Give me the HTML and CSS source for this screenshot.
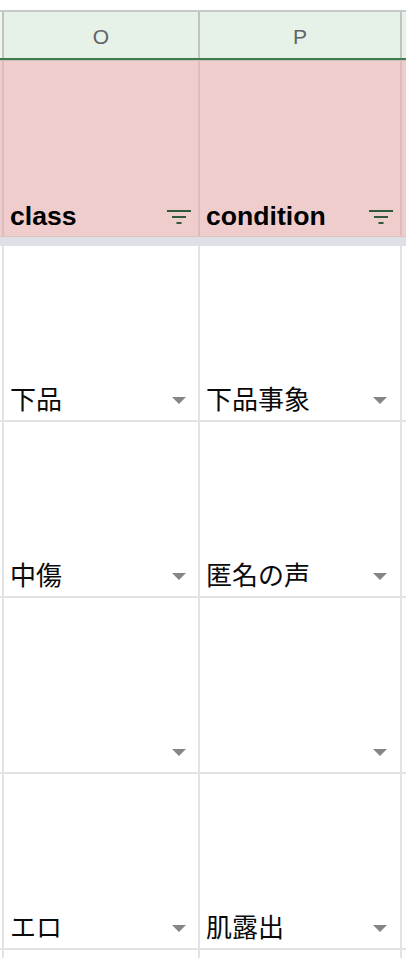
FILE: index.html
```html
<!DOCTYPE html>
<html lang="ja">
<head>
<meta charset="utf-8">
<title>Sheet</title>
<link rel="stylesheet" href="styles.css">
</head>
<body>
<div class="sheet">
  <div class="gap"></div>
  <div class="row colhead">
    <div class="cell c-o">O</div>
    <div class="cell c-p">P</div>
    <div class="cell tail"></div>
  </div>
  <div class="row head">
    <div class="cell c-o"><span class="txt">class</span><svg class="filter" width="24" height="14" viewBox="0 0 24 14"><rect x="0" y="0" width="24" height="2"/><rect x="5" y="6" width="14" height="2"/><rect x="9.5" y="12" width="5" height="2"/></svg></div>
    <div class="cell c-p"><span class="txt">condition</span><svg class="filter" width="24" height="14" viewBox="0 0 24 14"><rect x="0" y="0" width="24" height="2"/><rect x="5" y="6" width="14" height="2"/><rect x="9.5" y="12" width="5" height="2"/></svg></div>
    <div class="cell tail"></div>
  </div>
  <div class="freeze"></div>
  <div class="row body">
    <div class="cell c-o"><span class="txt">下品</span><span class="dd"></span></div>
    <div class="cell c-p"><span class="txt">下品事象</span><span class="dd"></span></div>
    <div class="cell tail"></div>
  </div>
  <div class="row body">
    <div class="cell c-o"><span class="txt">中傷</span><span class="dd"></span></div>
    <div class="cell c-p"><span class="txt">匿名の声</span><span class="dd"></span></div>
    <div class="cell tail"></div>
  </div>
  <div class="row body">
    <div class="cell c-o"><span class="txt"></span><span class="dd"></span></div>
    <div class="cell c-p"><span class="txt"></span><span class="dd"></span></div>
    <div class="cell tail"></div>
  </div>
  <div class="row body">
    <div class="cell c-o"><span class="txt">エロ</span><span class="dd"></span></div>
    <div class="cell c-p"><span class="txt">肌露出</span><span class="dd"></span></div>
    <div class="cell tail"></div>
  </div>
  <div class="row body last">
    <div class="cell c-o"></div>
    <div class="cell c-p"></div>
    <div class="cell tail"></div>
  </div>
</div>
</body>
</html>
```
FILE: styles.css
```css
html, body {
  margin: 0;
  padding: 0;
  background: #ffffff;
}
body {
  font-family: "Liberation Sans", "Noto Sans CJK JP", sans-serif;
}
.sheet {
  width: 406px;
  height: 958px;
  overflow: hidden;
}
.gap {
  height: 10px;
}
.row {
  display: flex;
  padding-left: 2px;
}
.cell {
  box-sizing: border-box;
  border-left: 2px solid transparent;
  display: flex;
  align-items: flex-end;
}
.c-o {
  width: 196px;
}
.c-p {
  width: 202px;
}
.tail {
  flex: 1;
}

/* column letters */
.colhead {
  background: #f1f6f2;
  border-top: 2px solid #c8c8c8;
  border-bottom: 2px solid #3f7c4b;
}
.colhead .cell {
  height: 46px;
  align-items: center;
  justify-content: center;
  padding-top: 4px;
  background: #e6f1e8;
  border-left-color: #c1c3c1;
  font-size: 21px;
  color: #5f6368;
}

/* header row */
.head {
  background: #efcdcd;
  border-top: 1px solid #cdbfbf;
  border-bottom: 1px solid #e2c1c4;
}
.head .cell {
  height: 175px;
  border-left-color: #dcbcbe;
  padding: 0 7px 5px 6px;
  font-size: 26.6px;
  line-height: 30px;
  font-weight: bold;
  color: #000000;
}
.head .tail {
  padding: 0;
}
.filter {
  flex: none;
  margin-bottom: 7px;
  fill: #2d5b3a;
}

.freeze {
  height: 9px;
  background: #dfe0e6;
}

/* body rows */
.body {
  border-bottom: 2px solid #e3e3e3;
}
.body .cell {
  height: 174px;
  border-left-color: #e3e3e3;
  font-size: 26px;
  line-height: 30px;
  color: #0a0a0a;
  padding: 0 12px 5px 6px;
}
.body .c-p {
  padding-right: 13px;
}
.body .tail {
  padding: 0;
}
.body.last {
  border-bottom: none;
}
.txt {
  flex: 1;
  white-space: nowrap;
  min-height: 30px;
}
.dd {
  flex: none;
  width: 0;
  height: 0;
  border-left: 7px solid transparent;
  border-right: 7px solid transparent;
  border-top: 7px solid #868686;
  margin-bottom: 11px;
}
```
